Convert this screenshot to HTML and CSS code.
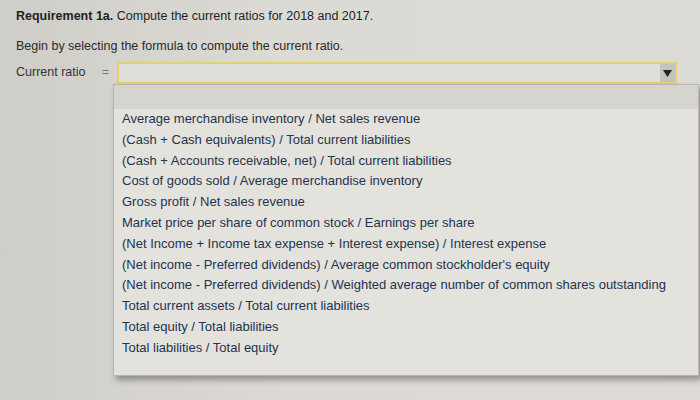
FILE: index.html
```html
<!DOCTYPE html>
<html>
<head>
<meta charset="utf-8">
<link rel="stylesheet" href="styles.css">
</head>
<body>
<div class="page">
  <p class="req"><b>Requirement 1a.</b> Compute the current ratios for 2018 and 2017.</p>
  <p class="intro">Begin by selecting the formula to compute the current ratio.</p>
  <div class="row">
    <span class="label">Current ratio</span>
    <span class="eq">=</span>
    <div class="selectwrap">
      <div class="select">
        <span class="arrow"><svg width="9" height="7" viewBox="0 0 9 7"><path d="M0 0H9L4.5 7Z" fill="#222"/></svg></span>
      </div>
      <ul class="menu">
        <li class="blank"></li>
        <li>Average merchandise inventory / Net sales revenue</li>
        <li>(Cash + Cash equivalents) / Total current liabilities</li>
        <li>(Cash + Accounts receivable, net) / Total current liabilities</li>
        <li>Cost of goods sold / Average merchandise inventory</li>
        <li>Gross profit / Net sales revenue</li>
        <li>Market price per share of common stock / Earnings per share</li>
        <li>(Net Income + Income tax expense + Interest expense) / Interest expense</li>
        <li>(Net income - Preferred dividends) / Average common stockholder's equity</li>
        <li>(Net income - Preferred dividends) / Weighted average number of common shares outstanding</li>
        <li>Total current assets / Total current liabilities</li>
        <li>Total equity / Total liabilities</li>
        <li>Total liabilities / Total equity</li>
      </ul>
    </div>
  </div>
</div>
</body>
</html>
```
FILE: styles.css
```css
html, body {
  margin: 0;
  padding: 0;
}
body {
  width: 700px;
  height: 400px;
  overflow: hidden;
  background: linear-gradient(90deg, #cfcdc7 0%, #dcdad4 40%, #dddbd6 100%);
  font-family: "Liberation Sans", Arial, sans-serif;
  color: #2b2b2b;
}
.page {
  padding: 8px 0 0 16px;
}
.req {
  margin: 0;
  font-size: 12.5px;
  line-height: 17px;
  color: #1f1f1f;
}
.intro {
  margin: 13px 0 0 0;
  font-size: 12.5px;
  line-height: 16px;
  color: #2a2a2a;
}
.row {
  display: flex;
  align-items: flex-start;
  margin-top: 8px;
}
.label {
  font-size: 12.5px;
  line-height: 20px;
  width: 86px;
  color: #333;
}
.eq {
  font-size: 12px;
  line-height: 20px;
  color: #777;
  width: 15px;
}
.selectwrap {
  position: relative;
  width: 580px;
}
.select {
  width: 556px;
  height: 18px;
  border: 2px solid #e6cf72;
  background: #e0ded9;
  display: flex;
  justify-content: flex-end;
  align-items: center;
}
.arrow {
  width: 15px;
  height: 18px;
  background: #c4c2bd;
  display: flex;
  align-items: center;
  justify-content: center;
}
.menu {
  position: absolute;
  left: -4px;
  top: 22px;
  width: 584px;
  margin: 0;
  padding: 0 0 16px 0;
  list-style: none;
  background: #e4e2dd;
  border: 1px solid #b8b6b1;
  box-shadow: 3px 4px 6px rgba(60, 55, 50, 0.45);
}
.menu li {
  font-size: 13px;
  line-height: 20.8px;
  padding-left: 8px;
  color: #23344f;
  white-space: nowrap;
}
.menu li.blank {
  height: 24px;
  background: #d6d4cf;
}
```
